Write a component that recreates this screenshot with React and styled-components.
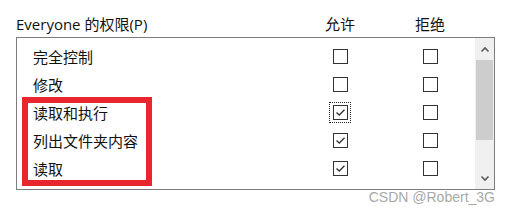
import styled, { createGlobalStyle } from "styled-components";

const Global = createGlobalStyle`
  html, body {
    margin: 0;
    padding: 0;
    background: #fff;
  }
  body {
    font-family: "Open Sans", "Noto Sans CJK SC", sans-serif;
    color: #111;
  }
`;

const Page = styled.div`
  width: 510px;
  height: 213px;
  padding: 0 15px 0 16px;
  box-sizing: border-box;
  overflow: hidden;
`;

const Header = styled.div`
  display: grid;
  grid-template-columns: 1fr 90px 90px 20px;
  align-items: center;
  height: 37px;
  padding-top: 10px;
  box-sizing: border-box;
  font-size: 15px;
`;

const HeadCell = styled.div`
  text-align: ${(p) => (p.$center ? "center" : "left")};
  line-height: 22px;
`;

const ListBox = styled.div`
  position: relative;
  display: flex;
  height: 153px;
  border: 1px solid #7d7d7d;
  box-sizing: border-box;
  overflow: hidden;
`;

const Rows = styled.div`
  flex: 1;
  padding-top: 4px;
`;

const Row = styled.div`
  display: grid;
  grid-template-columns: 1fr 90px 90px;
  align-items: center;
  height: 28px;
`;

const Name = styled.div`
  padding-left: 16px;
  font-size: 15px;
  line-height: 28px;
  transform: translateY(1px);
`;

const BoxCell = styled.div`
  display: flex;
  justify-content: center;
  align-items: center;
`;

const Focus = styled.div`
  display: flex;
  justify-content: center;
  align-items: center;
  width: 22px;
  height: 21px;
  box-sizing: border-box;
  border: 1px dotted ${(p) => (p.$on ? "#222" : "transparent")};
`;

const Box = styled.div`
  width: 15px;
  height: 15px;
  box-sizing: border-box;
  border: 1px solid #333;
  background: #fff;
  display: flex;
  align-items: center;
  justify-content: center;
`;

const ScrollBar = styled.div`
  width: 19px;
  display: flex;
  flex-direction: column;
  background: #f0f0f0;
`;

const Arrow = styled.div`
  height: 22px;
  display: flex;
  align-items: center;
  justify-content: center;
`;

const Track = styled.div`
  flex: 1;
  padding: 0 1px;
`;

const Thumb = styled.div`
  height: 80px;
  background: #cdcdcd;
`;

const Highlight = styled.div`
  position: absolute;
  left: 5px;
  top: 59px;
  width: 130px;
  height: 89px;
  border: 6px solid #e8262d;
  box-sizing: border-box;
  pointer-events: none;
`;

const Watermark = styled.div`
  text-align: right;
  font-family: "Liberation Sans", Arial, sans-serif;
  font-size: 14px;
  color: #a9a9a9;
  line-height: 16px;
  margin-top: -1px;
`;

const Check = () => (
  <svg width="11" height="9" viewBox="0 0 11 9">
    <path d="M1.5 4.5 L4.3 7 L9.5 1.8" fill="none" stroke="#333" strokeWidth="1.3" />
  </svg>
);

const Chevron = ({ up }) => (
  <svg width="10" height="7" viewBox="0 0 10 7">
    <path
      d={up ? "M1.5 5.5 L5 2 L8.5 5.5" : "M1.5 1.5 L5 5 L8.5 1.5"}
      fill="none"
      stroke="#5a5a5a"
      strokeWidth="1.6"
    />
  </svg>
);

// last row is scrolled mostly out of view, only its checkbox tops show
const perms = [
  { id: 1, name: "完全控制", allow: false },
  { id: 2, name: "修改", allow: false },
  { id: 3, name: "读取和执行", allow: true, focus: true },
  { id: 4, name: "列出文件夹内容", allow: true },
  { id: 5, name: "读取", allow: true },
  { id: 6, name: "", allow: false },
];

const CheckBox = ({ checked, focus }) => (
  <BoxCell>
    <Focus $on={focus}>
      <Box>{checked && <Check />}</Box>
    </Focus>
  </BoxCell>
);

export default function App() {
  return (
    <>
      <Global />
      <Page>
        <Header>
          <HeadCell>Everyone 的权限(P)</HeadCell>
          <HeadCell $center>允许</HeadCell>
          <HeadCell $center>拒绝</HeadCell>
          <div />
        </Header>
        <ListBox>
          <Rows>
            {perms.map((p) => (
              <Row key={p.id}>
                <Name>{p.name}</Name>
                <CheckBox checked={p.allow} focus={p.focus} />
                <CheckBox checked={false} />
              </Row>
            ))}
          </Rows>
          <ScrollBar>
            <Arrow>
              <Chevron up />
            </Arrow>
            <Track>
              <Thumb />
            </Track>
            <Arrow>
              <Chevron />
            </Arrow>
          </ScrollBar>
          <Highlight />
        </ListBox>
        <Watermark>CSDN @Robert_3G</Watermark>
      </Page>
    </>
  );
}
